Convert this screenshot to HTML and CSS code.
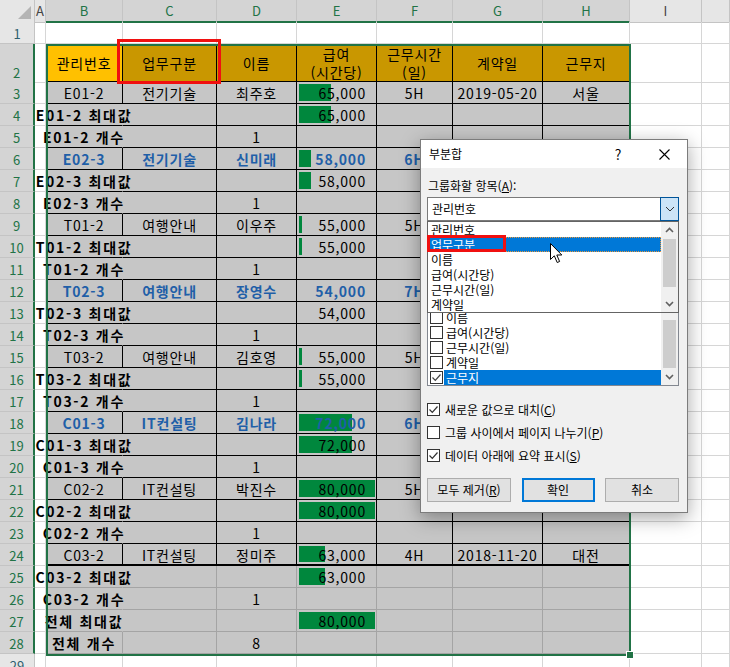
FILE: index.html
```html
<!DOCTYPE html>
<html lang="ko">
<head>
    <meta charset="UTF-8">
    <title>부분합</title>
    <link rel="stylesheet" href="styles.css">
</head>
<body>
<div class="sheet">

    <div class="row colhead">
        <div class="ch corner"><svg width="35" height="22" viewBox="0 0 35 22"><polygon points="18,19 31,19 31,6" fill="#b4b4b4"/></svg></div>
        <div class="ch">A</div>
        <div class="ch on">B</div>
        <div class="ch on">C</div>
        <div class="ch on">D</div>
        <div class="ch on">E</div>
        <div class="ch on">F</div>
        <div class="ch on">G</div>
        <div class="ch on">H</div>
        <div class="ch">I</div>
        <div class="ch"></div>
    </div>

    <div class="row">
        <div class="rh off">1</div>
        <div class="cell"></div><div class="cell"></div><div class="cell"></div><div class="cell"></div><div class="cell"></div>
        <div class="cell"></div><div class="cell"></div><div class="cell"></div><div class="cell"></div><div class="cell"></div>
    </div>

    <div class="row tall">
        <div class="rh">2</div>
        <div class="cell"></div>
        <div class="cell hd active">관리번호</div>
        <div class="cell hd">업무구분</div>
        <div class="cell hd">이름</div>
        <div class="cell hd">급여<br>(시간당)</div>
        <div class="cell hd">근무시간<br>(일)</div>
        <div class="cell hd">계약일</div>
        <div class="cell hd">근무지</div>
        <div class="cell"></div><div class="cell"></div>
    </div>

    <div class="row">
        <div class="rh">3</div>
        <div class="cell"></div>
        <div class="cell tb">E01-2</div>
        <div class="cell tb">전기기술</div>
        <div class="cell tb">최주호</div>
        <div class="cell tb num bar" style="--bar:32px">65,000</div>
        <div class="cell tb">5H</div>
        <div class="cell tb">2019-05-20</div>
        <div class="cell tb">서울</div>
        <div class="cell"></div><div class="cell"></div>
    </div>

    <div class="row">
        <div class="rh">4</div>
        <div class="cell"></div>
        <div class="cell tb open"><b class="lbl">E01-2 최대값</b></div>
        <div class="cell tb"></div>
        <div class="cell tb"></div>
        <div class="cell tb num bar" style="--bar:32px">65,000</div>
        <div class="cell tb"></div><div class="cell tb"></div><div class="cell tb"></div>
        <div class="cell"></div><div class="cell"></div>
    </div>

    <div class="row">
        <div class="rh">5</div>
        <div class="cell"></div>
        <div class="cell tb open"><b class="lbl">E01-2 개수</b></div>
        <div class="cell tb"></div>
        <div class="cell tb">1</div>
        <div class="cell tb"></div>
        <div class="cell tb"></div><div class="cell tb"></div><div class="cell tb"></div>
        <div class="cell"></div><div class="cell"></div>
    </div>

    <div class="row hot">
        <div class="rh">6</div>
        <div class="cell"></div>
        <div class="cell tb">E02-3</div>
        <div class="cell tb">전기기술</div>
        <div class="cell tb">신미래</div>
        <div class="cell tb num bar" style="--bar:12px">58,000</div>
        <div class="cell tb">6H</div>
        <div class="cell tb"></div>
        <div class="cell tb"></div>
        <div class="cell"></div><div class="cell"></div>
    </div>

    <div class="row">
        <div class="rh">7</div>
        <div class="cell"></div>
        <div class="cell tb open"><b class="lbl">E02-3 최대값</b></div>
        <div class="cell tb"></div>
        <div class="cell tb"></div>
        <div class="cell tb num bar" style="--bar:12px">58,000</div>
        <div class="cell tb"></div><div class="cell tb"></div><div class="cell tb"></div>
        <div class="cell"></div><div class="cell"></div>
    </div>

    <div class="row">
        <div class="rh">8</div>
        <div class="cell"></div>
        <div class="cell tb open"><b class="lbl">E02-3 개수</b></div>
        <div class="cell tb"></div>
        <div class="cell tb">1</div>
        <div class="cell tb"></div>
        <div class="cell tb"></div><div class="cell tb"></div><div class="cell tb"></div>
        <div class="cell"></div><div class="cell"></div>
    </div>

    <div class="row">
        <div class="rh">9</div>
        <div class="cell"></div>
        <div class="cell tb">T01-2</div>
        <div class="cell tb">여행안내</div>
        <div class="cell tb">이우주</div>
        <div class="cell tb num bar" style="--bar:3px">55,000</div>
        <div class="cell tb">5H</div>
        <div class="cell tb"></div>
        <div class="cell tb"></div>
        <div class="cell"></div><div class="cell"></div>
    </div>

    <div class="row">
        <div class="rh">10</div>
        <div class="cell"></div>
        <div class="cell tb open"><b class="lbl">T01-2 최대값</b></div>
        <div class="cell tb"></div>
        <div class="cell tb"></div>
        <div class="cell tb num bar" style="--bar:3px">55,000</div>
        <div class="cell tb"></div><div class="cell tb"></div><div class="cell tb"></div>
        <div class="cell"></div><div class="cell"></div>
    </div>

    <div class="row">
        <div class="rh">11</div>
        <div class="cell"></div>
        <div class="cell tb open"><b class="lbl">T01-2 개수</b></div>
        <div class="cell tb"></div>
        <div class="cell tb">1</div>
        <div class="cell tb"></div>
        <div class="cell tb"></div><div class="cell tb"></div><div class="cell tb"></div>
        <div class="cell"></div><div class="cell"></div>
    </div>

    <div class="row hot">
        <div class="rh">12</div>
        <div class="cell"></div>
        <div class="cell tb">T02-3</div>
        <div class="cell tb">여행안내</div>
        <div class="cell tb">장영수</div>
        <div class="cell tb num">54,000</div>
        <div class="cell tb">7H</div>
        <div class="cell tb"></div>
        <div class="cell tb"></div>
        <div class="cell"></div><div class="cell"></div>
    </div>

    <div class="row">
        <div class="rh">13</div>
        <div class="cell"></div>
        <div class="cell tb open"><b class="lbl">T02-3 최대값</b></div>
        <div class="cell tb"></div>
        <div class="cell tb"></div>
        <div class="cell tb num">54,000</div>
        <div class="cell tb"></div><div class="cell tb"></div><div class="cell tb"></div>
        <div class="cell"></div><div class="cell"></div>
    </div>

    <div class="row">
        <div class="rh">14</div>
        <div class="cell"></div>
        <div class="cell tb open"><b class="lbl">T02-3 개수</b></div>
        <div class="cell tb"></div>
        <div class="cell tb">1</div>
        <div class="cell tb"></div>
        <div class="cell tb"></div><div class="cell tb"></div><div class="cell tb"></div>
        <div class="cell"></div><div class="cell"></div>
    </div>

    <div class="row">
        <div class="rh">15</div>
        <div class="cell"></div>
        <div class="cell tb">T03-2</div>
        <div class="cell tb">여행안내</div>
        <div class="cell tb">김호영</div>
        <div class="cell tb num bar" style="--bar:3px">55,000</div>
        <div class="cell tb">5H</div>
        <div class="cell tb"></div>
        <div class="cell tb"></div>
        <div class="cell"></div><div class="cell"></div>
    </div>

    <div class="row">
        <div class="rh">16</div>
        <div class="cell"></div>
        <div class="cell tb open"><b class="lbl">T03-2 최대값</b></div>
        <div class="cell tb"></div>
        <div class="cell tb"></div>
        <div class="cell tb num bar" style="--bar:3px">55,000</div>
        <div class="cell tb"></div><div class="cell tb"></div><div class="cell tb"></div>
        <div class="cell"></div><div class="cell"></div>
    </div>

    <div class="row">
        <div class="rh">17</div>
        <div class="cell"></div>
        <div class="cell tb open"><b class="lbl">T03-2 개수</b></div>
        <div class="cell tb"></div>
        <div class="cell tb">1</div>
        <div class="cell tb"></div>
        <div class="cell tb"></div><div class="cell tb"></div><div class="cell tb"></div>
        <div class="cell"></div><div class="cell"></div>
    </div>

    <div class="row hot">
        <div class="rh">18</div>
        <div class="cell"></div>
        <div class="cell tb">C01-3</div>
        <div class="cell tb">IT컨설팅</div>
        <div class="cell tb">김나라</div>
        <div class="cell tb num bar" style="--bar:53px">72,000</div>
        <div class="cell tb">6H</div>
        <div class="cell tb"></div>
        <div class="cell tb"></div>
        <div class="cell"></div><div class="cell"></div>
    </div>

    <div class="row">
        <div class="rh">19</div>
        <div class="cell"></div>
        <div class="cell tb open"><b class="lbl">C01-3 최대값</b></div>
        <div class="cell tb"></div>
        <div class="cell tb"></div>
        <div class="cell tb num bar" style="--bar:53px">72,000</div>
        <div class="cell tb"></div><div class="cell tb"></div><div class="cell tb"></div>
        <div class="cell"></div><div class="cell"></div>
    </div>

    <div class="row">
        <div class="rh">20</div>
        <div class="cell"></div>
        <div class="cell tb open"><b class="lbl">C01-3 개수</b></div>
        <div class="cell tb"></div>
        <div class="cell tb">1</div>
        <div class="cell tb"></div>
        <div class="cell tb"></div><div class="cell tb"></div><div class="cell tb"></div>
        <div class="cell"></div><div class="cell"></div>
    </div>

    <div class="row">
        <div class="rh">21</div>
        <div class="cell"></div>
        <div class="cell tb">C02-2</div>
        <div class="cell tb">IT컨설팅</div>
        <div class="cell tb">박진수</div>
        <div class="cell tb num bar" style="--bar:76px">80,000</div>
        <div class="cell tb">5H</div>
        <div class="cell tb"></div>
        <div class="cell tb"></div>
        <div class="cell"></div><div class="cell"></div>
    </div>

    <div class="row">
        <div class="rh">22</div>
        <div class="cell"></div>
        <div class="cell tb open"><b class="lbl">C02-2 최대값</b></div>
        <div class="cell tb"></div>
        <div class="cell tb"></div>
        <div class="cell tb num bar" style="--bar:76px">80,000</div>
        <div class="cell tb"></div><div class="cell tb"></div><div class="cell tb"></div>
        <div class="cell"></div><div class="cell"></div>
    </div>

    <div class="row">
        <div class="rh">23</div>
        <div class="cell"></div>
        <div class="cell tb open"><b class="lbl">C02-2 개수</b></div>
        <div class="cell tb"></div>
        <div class="cell tb">1</div>
        <div class="cell tb"></div>
        <div class="cell tb"></div><div class="cell tb"></div><div class="cell tb"></div>
        <div class="cell"></div><div class="cell"></div>
    </div>

    <div class="row end">
        <div class="rh">24</div>
        <div class="cell"></div>
        <div class="cell tb">C03-2</div>
        <div class="cell tb">IT컨설팅</div>
        <div class="cell tb">정미주</div>
        <div class="cell tb num bar" style="--bar:26px">63,000</div>
        <div class="cell tb">4H</div>
        <div class="cell tb">2018-11-20</div>
        <div class="cell tb">대전</div>
        <div class="cell"></div><div class="cell"></div>
    </div>

    <div class="row">
        <div class="rh">25</div>
        <div class="cell"></div>
        <div class="cell in open"><b class="lbl">C03-2 최대값</b></div>
        <div class="cell in"></div>
        <div class="cell in"></div>
        <div class="cell in num bar" style="--bar:26px">63,000</div>
        <div class="cell in"></div><div class="cell in"></div><div class="cell in"></div>
        <div class="cell"></div><div class="cell"></div>
    </div>

    <div class="row">
        <div class="rh">26</div>
        <div class="cell"></div>
        <div class="cell in open"><b class="lbl">C03-2 개수</b></div>
        <div class="cell in"></div>
        <div class="cell in">1</div>
        <div class="cell in"></div>
        <div class="cell in"></div><div class="cell in"></div><div class="cell in"></div>
        <div class="cell"></div><div class="cell"></div>
    </div>

    <div class="row">
        <div class="rh">27</div>
        <div class="cell"></div>
        <div class="cell in open"><b class="lbl">전체 최대값</b></div>
        <div class="cell in"></div>
        <div class="cell in"></div>
        <div class="cell in num bar" style="--bar:76px">80,000</div>
        <div class="cell in"></div><div class="cell in"></div><div class="cell in"></div>
        <div class="cell"></div><div class="cell"></div>
    </div>

    <div class="row">
        <div class="rh">28</div>
        <div class="cell"></div>
        <div class="cell in"><b class="lbl">전체 개수</b></div>
        <div class="cell in"></div>
        <div class="cell in">8</div>
        <div class="cell in"></div>
        <div class="cell in"></div><div class="cell in"></div><div class="cell in"></div>
        <div class="cell"></div><div class="cell"></div>
    </div>

    <div class="row">
        <div class="rh off">29</div>
        <div class="cell"></div><div class="cell"></div><div class="cell"></div><div class="cell"></div><div class="cell"></div>
        <div class="cell"></div><div class="cell"></div><div class="cell"></div><div class="cell"></div><div class="cell"></div>
    </div>

    <!-- selection frame + red mark on C2 -->
    <div class="selection"><span class="handle"></span></div>
    <div class="mark mark-c2"></div>

    <div class="dialog">
        <div class="dlg-title">
            <span class="dlg-name">부분합</span>
            <span class="tbtn">?</span>
            <span class="tbtn"><svg width="11" height="11" viewBox="0 0 11 11"><path d="M0.5 0.5 L10.5 10.5 M10.5 0.5 L0.5 10.5" stroke="#000" stroke-width="1.1"/></svg></span>
        </div>
        <div class="dlg-body">
            <div class="dlg-label">그룹화할 항목(<u>A</u>):</div>
            <div class="combo">
                <span class="combo-text">관리번호</span>
                <span class="combo-btn"><svg width="10" height="6" viewBox="0 0 10 6"><path d="M1 1 L5 5 L9 1" fill="none" stroke="#333" stroke-width="1"/></svg></span>
            </div>
            <div class="dlg-label gap"></div>
            <div class="listbox">
                <div class="lb-items">
                    <div class="lb-item"><span class="cb"></span><span class="lb-text">이름</span></div>
                    <div class="lb-item"><span class="cb"></span><span class="lb-text">급여(시간당)</span></div>
                    <div class="lb-item"><span class="cb"></span><span class="lb-text">근무시간(일)</span></div>
                    <div class="lb-item"><span class="cb"></span><span class="lb-text">계약일</span></div>
                    <div class="lb-item"><span class="cb"><svg width="11" height="11" viewBox="0 0 11 11"><path d="M1.5 5.5 L4.3 8.3 L9.5 2.5" fill="none" stroke="#444" stroke-width="1.2"/></svg></span><span class="lb-text hl">근무지</span></div>
                </div>
                <div class="vscroll">
                    <span class="arrow"><svg width="9" height="6" viewBox="0 0 9 6"><path d="M1 5 L4.5 1.5 L8 5" fill="none" stroke="#606060" stroke-width="1.6"/></svg></span>
                    <span class="track"><span class="thumb low"></span></span>
                    <span class="arrow"><svg width="9" height="6" viewBox="0 0 9 6"><path d="M1 1 L4.5 4.5 L8 1" fill="none" stroke="#606060" stroke-width="1.6"/></svg></span>
                </div>
            </div>

            <div class="chk-row first">
                <span class="cb"><svg width="11" height="11" viewBox="0 0 11 11"><path d="M1.5 5.5 L4.3 8.3 L9.5 2.5" fill="none" stroke="#333" stroke-width="1.2"/></svg></span>
                <span class="chk-text">새로운 값으로 대치(<u>C</u>)</span>
            </div>
            <div class="chk-row">
                <span class="cb"></span>
                <span class="chk-text">그룹 사이에서 페이지 나누기(<u>P</u>)</span>
            </div>
            <div class="chk-row">
                <span class="cb"><svg width="11" height="11" viewBox="0 0 11 11"><path d="M1.5 5.5 L4.3 8.3 L9.5 2.5" fill="none" stroke="#333" stroke-width="1.2"/></svg></span>
                <span class="chk-text">데이터 아래에 요약 표시(<u>S</u>)</span>
            </div>

            <div class="buttons">
                <span class="btn wide">모두 제거(<u>R</u>)</span>
                <span class="btn primary">확인</span>
                <span class="btn">취소</span>
            </div>
        </div>

        <!-- open dropdown of the combo -->
        <div class="dropdown">
            <div class="dd-items">
                <div class="dd-item">관리번호</div>
                <div class="dd-item sel">업무구분</div>
                <div class="dd-item">이름</div>
                <div class="dd-item">급여(시간당)</div>
                <div class="dd-item">근무시간(일)</div>
                <div class="dd-item">계약일</div>
            </div>
            <div class="vscroll">
                <span class="arrow"><svg width="9" height="6" viewBox="0 0 9 6"><path d="M1 5 L4.5 1.5 L8 5" fill="none" stroke="#606060" stroke-width="1.6"/></svg></span>
                <span class="track"><span class="thumb"></span></span>
                <span class="arrow"><svg width="9" height="6" viewBox="0 0 9 6"><path d="M1 1 L4.5 4.5 L8 1" fill="none" stroke="#606060" stroke-width="1.6"/></svg></span>
            </div>
        </div>
        <div class="mark mark-item"></div>
    </div>

    <svg class="cursor" width="14" height="21" viewBox="0 0 14 21"><path d="M0.5 0.5 L0.5 16.5 L4.3 12.8 L7.2 19.5 L9.6 18.5 L6.8 12 L11.8 12 Z" fill="#fff" stroke="#000" stroke-width="1" stroke-linejoin="round"/></svg>
</div>
</body>
</html>
```

FILE: styles.css
```css
body {
    margin: 0;
    background: #fff;
    font-family: "Noto Sans CJK KR", "Noto Sans", sans-serif;
    color: #000;
}
.sheet {
    position: relative;
    width: 730px;
    height: 667px;
    overflow: hidden;
}
.row {
    display: grid;
    grid-template-columns: 35px 11px 77px 94px 80px 80px 76px 90px 87px 72px 1fr;
    height: 22px;
}
.row.tall {
    height: 38px;
}

/* column headers */
.ch {
    box-sizing: border-box;
    background: #e6e6e6;
    border-right: 1px solid #c4c4c4;
    border-bottom: 1px solid #c4c4c4;
    color: #444;
    font-size: 13px;
    line-height: 16px;
    display: flex;
    align-items: center;
    justify-content: center;
}
.ch.on {
    background: #d4d4d4;
    color: #217346;
    border-bottom: 2px solid #217346;
}
.ch.corner {
    display: block;
    padding: 0;
}
.ch.corner svg {
    display: block;
}

/* row headers */
.rh {
    box-sizing: border-box;
    background: #d4d4d4;
    border-right: 2px solid #217346;
    border-bottom: 1px solid #c4c4c4;
    color: #217346;
    font-size: 13px;
    line-height: 16px;
    display: flex;
    align-items: flex-end;
    justify-content: center;
    padding-bottom: 1px;
}
.rh.off {
    background: #e6e6e6;
    color: #2f5f6e;
    border-right: 1px solid #c4c4c4;
}

/* cells */
.cell {
    box-sizing: border-box;
    border-right: 1px solid #d6d6d6;
    border-bottom: 1px solid #d6d6d6;
    display: flex;
    align-items: center;
    justify-content: center;
    white-space: nowrap;
    font-size: 14px;
    line-height: 18px;
    letter-spacing: 0.8px;
    padding-top: 1px;
}
.cell.hd {
    background: #c99700;
    border-color: #000;
    border-bottom-width: 2px;
    text-align: center;
}
.cell.hd.active {
    background: #ffc000;
}
.cell.tb {
    background: #c6c6c6;
    border-color: #000;
}
.cell.in {
    background: #c6c6c6;
    border-color: #a4a4a4;
}
.cell.open {
    border-right-color: transparent;
}
.cell.num {
    justify-content: flex-end;
    padding-right: 10px;
}
.cell.bar {
    background-image: linear-gradient(#00873d, #00873d);
    background-repeat: no-repeat;
    background-position: 2px 2px;
    background-size: var(--bar) calc(100% - 4px);
}
.row.end .cell.tb {
    border-bottom: 2px solid #000;
}
.row.hot .cell.tb {
    color: #1f5fa8;
    font-weight: bold;
}
.lbl {
    position: relative;
    z-index: 1;
    font-weight: bold;
    letter-spacing: 1.7px;
}

/* overlays */
.selection {
    position: absolute;
    left: 46px;
    top: 44px;
    width: 585px;
    height: 612px;
    box-sizing: border-box;
    border: 2px solid #217346;
    z-index: 2;
}
.handle {
    position: absolute;
    right: -5px;
    bottom: -5px;
    width: 6px;
    height: 6px;
    background: #217346;
    border: 1px solid #fff;
}
.mark {
    position: absolute;
    box-sizing: border-box;
    border: 3px solid #f01010;
    z-index: 3;
}
.mark-c2 {
    left: 117px;
    top: 39px;
    width: 104px;
    height: 45px;
}
.cursor {
    position: absolute;
    left: 550px;
    top: 243px;
    z-index: 10;
}

/* dialog */
.dialog {
    position: absolute;
    left: 420px;
    top: 139px;
    width: 268px;
    height: 374px;
    box-sizing: border-box;
    background: #f0f0f0;
    border: 1px solid #7c7c7c;
    box-shadow: 0 5px 18px rgba(0, 0, 0, 0.35);
    font-size: 12px;
    line-height: 16px;
    z-index: 5;
}
.dlg-title {
    height: 28px;
    background: #fff;
    display: flex;
    align-items: center;
    padding-left: 8px;
}
.dlg-name {
    flex: 1;
}
.tbtn {
    width: 46px;
    height: 28px;
    display: flex;
    align-items: center;
    justify-content: center;
    font-size: 14px;
}
.dlg-body {
    padding: 10px 8px 0 6px;
}
.dlg-label {
    height: 16px;
    padding-left: 1px;
}
.dlg-label.gap {
    margin-top: 5px;
}
.combo {
    margin-top: 3px;
    height: 24px;
    box-sizing: border-box;
    border: 1px solid #7a7a7a;
    background: #fff;
    display: flex;
}
.combo-text {
    flex: 1;
    padding-left: 4px;
    display: flex;
    align-items: center;
}
.combo-btn {
    width: 17px;
    margin: -1px -1px -1px 0;
    background: #cce4f7;
    border: 1px solid #005499;
    display: flex;
    align-items: center;
    justify-content: center;
}
.listbox {
    margin-top: 3px;
    height: 141px;
    box-sizing: border-box;
    border: 1px solid #828790;
    background: #fff;
    display: flex;
    overflow: hidden;
}
.lb-items {
    flex: 1;
    display: flex;
    flex-direction: column;
    justify-content: flex-end;
}
.lb-item {
    height: 15px;
    line-height: 14px;
    display: flex;
    align-items: center;
}
.lb-item .cb {
    margin-left: 2px;
}
.lb-text {
    flex: 1;
    height: 15px;
    margin-left: 1px;
    padding-left: 2px;
    display: flex;
    align-items: center;
}
.lb-text.hl {
    background: #0078d7;
    color: #fff;
}
.cb {
    width: 13px;
    height: 13px;
    box-sizing: border-box;
    border: 1px solid #333;
    background: #fff;
    display: flex;
    align-items: center;
    justify-content: center;
    flex-shrink: 0;
}
.vscroll {
    width: 17px;
    background: #f0f0f0;
    display: flex;
    flex-direction: column;
}
.arrow {
    height: 16px;
    display: flex;
    align-items: center;
    justify-content: center;
}
.track {
    flex: 1;
    display: flex;
    flex-direction: column;
}
.thumb {
    height: 48px;
    margin: 1px 2px 0;
    background: #cdcdcd;
}
.thumb.low {
    margin-top: auto;
    margin-bottom: 1px;
}
.chk-row {
    height: 23px;
    display: flex;
    align-items: center;
}
.chk-row.first {
    margin-top: 12px;
}
.chk-text {
    margin-left: 5px;
}
.buttons {
    margin-top: 11px;
    display: flex;
    justify-content: space-between;
}
.btn {
    width: 74px;
    height: 24px;
    box-sizing: border-box;
    background: #e1e1e1;
    border: 1px solid #adadad;
    display: flex;
    align-items: center;
    justify-content: center;
}
.btn.wide {
    width: 84px;
}
.btn.primary {
    width: 73px;
    border: 2px solid #0078d7;
}
.dropdown {
    position: absolute;
    left: 6px;
    top: 81px;
    width: 252px;
    height: 92px;
    box-sizing: border-box;
    border: 1px solid #646464;
    background: #fff;
    display: flex;
    z-index: 2;
}
.dd-items {
    flex: 1;
}
.dd-item {
    height: 15px;
    line-height: 14px;
    padding-left: 3px;
    display: flex;
    align-items: center;
}
.dd-item.sel {
    background: #0078d7;
    color: #fff;
    outline: 1px dotted #e8973a;
    outline-offset: -1px;
}
.mark-item {
    left: 6px;
    top: 95px;
    width: 79px;
    height: 17px;
}
```
